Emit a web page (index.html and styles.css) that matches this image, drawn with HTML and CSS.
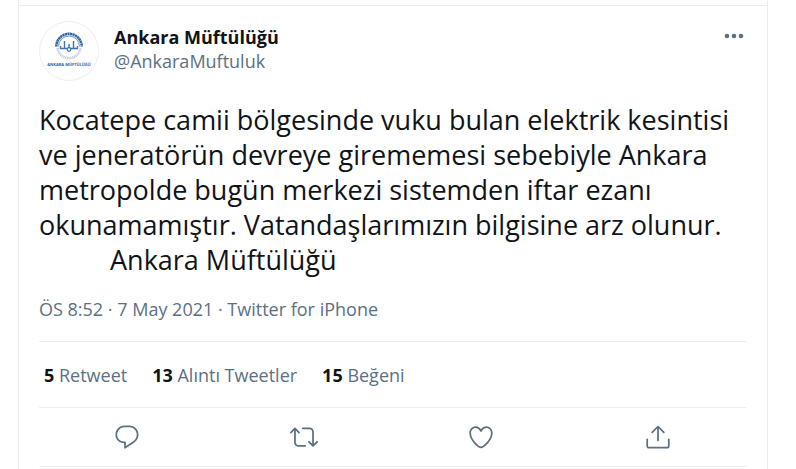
FILE: index.html
```html
<!DOCTYPE html>
<html lang="tr">
<head>
    <meta charset="utf-8">
    <meta name="viewport" content="width=device-width, initial-scale=1">
    <title>Ankara Müftülüğü</title>
    <link rel="stylesheet" href="styles.css">
</head>
<body>

<main class="column">
    <article class="tweet">

        <!-- author -->
        <header class="author">
            <svg class="avatar" viewBox="0 0 60 60" aria-hidden="true">
                <circle cx="30" cy="30" r="29.5" fill="#fefefe" stroke="#eceef0"/>
                <path d="M17.300 25.500a12.700 12.700 0 0 1 25.400 0" fill="none" stroke="#2f64a5" stroke-width="2.600" stroke-dasharray="2.200 .4"/>
                <path d="M19.500 25.500a10.500 10.500 0 0 1 21 0" fill="none" stroke="#6b94c6" stroke-width="1"/>
                <path d="M18.500 27a11.600 11.600 0 0 0 23 0" fill="none" stroke="#c3cedd" stroke-width="2.600" stroke-dasharray="1.200 .6"/>
                <path d="M25.500 20v7.500h-4v-2.500M34.500 20v7.500h4v-2.500M30 23v4M25.500 27.500h3M34.500 27.500h-3" fill="none" stroke="#3f74b4" stroke-width="1.400"/>
                <circle cx="30" cy="28.500" r="1.800" fill="none" stroke="#3f74b4" stroke-width="1.200"/>
                <text class="avatar-text" x="30" y="45" text-anchor="middle">ANKARA MÜFTÜLÜĞÜ</text>
            </svg>
            <div class="names">
                <a class="name" href="#">Ankara Müftülüğü</a>
                <a class="handle" href="#">@AnkaraMuftuluk</a>
            </div>
            <button class="more" type="button" aria-label="Daha fazla">
                <svg viewBox="0 0 24 24"><circle cx="5" cy="12" r="2.300"/><circle cx="12" cy="12" r="2.300"/><circle cx="19" cy="12" r="2.300"/></svg>
            </button>
        </header>

        <!-- text -->
        <div class="text">
            <p>Kocatepe camii bölgesinde vuku bulan elektrik kesintisi
            ve jeneratörün devreye girememesi sebebiyle Ankara
            metropolde bugün merkezi sistemden iftar ezanı
            okunamamıştır. Vatandaşlarımızın bilgisine arz olunur.</p>
            <p class="signature">Ankara Müftülüğü</p>
        </div>

        <div class="meta"><a href="#">ÖS 8:52 · 7 May 2021</a> · <a href="#">Twitter for iPhone</a></div>

        <!-- counts -->
        <div class="stats">
            <a href="#"><strong>5</strong> Retweet</a>
            <a href="#"><strong>13</strong> Alıntı Tweetler</a>
            <a href="#"><strong>15</strong> Beğeni</a>
        </div>

        <!-- actions -->
        <div class="actions">
            <button type="button" aria-label="Yanıtla">
                <svg viewBox="0 0 24 24"><path d="M14.046 2.242l-4.148-.01h-.002c-4.374 0-7.8 3.427-7.8 7.802 0 4.098 3.186 7.206 7.465 7.37v3.828c0 .108.044.286.12.403.142.225.384.347.632.347.138 0 .277-.038.402-.118.264-.168 6.473-4.14 8.088-5.506 1.902-1.61 3.04-3.97 3.043-6.312v-.017c-.006-4.367-3.43-7.787-7.8-7.788zm3.787 12.972c-1.134.96-4.862 3.405-6.772 4.643V16.67c0-.414-.335-.75-.75-.75h-.396c-3.66 0-6.318-2.476-6.318-5.886 0-3.534 2.768-6.302 6.3-6.302l4.147.01h.002c3.532 0 6.3 2.766 6.302 6.296-.003 1.91-.942 3.844-2.514 5.176z"/></svg>
            </button>
            <button type="button" aria-label="Retweetle">
                <svg viewBox="0 0 24 24"><path d="M23.77 15.67c-.292-.293-.767-.293-1.06 0l-2.22 2.22V7.65c0-2.068-1.683-3.75-3.75-3.75h-5.85c-.414 0-.75.336-.75.75s.336.75.75.75h5.85c1.24 0 2.25 1.01 2.25 2.25v10.24l-2.22-2.22c-.293-.293-.768-.293-1.06 0s-.294.768 0 1.06l3.5 3.5c.145.147.337.22.53.22s.383-.072.53-.22l3.5-3.5c.294-.292.294-.767 0-1.06zm-10.66 3.28H7.26c-1.24 0-2.25-1.01-2.25-2.25V6.46l2.22 2.22c.148.147.34.22.532.22s.384-.073.53-.22c.293-.293.293-.768 0-1.06l-3.5-3.5c-.293-.294-.768-.294-1.06 0l-3.5 3.5c-.294.292-.294.767 0 1.06s.767.293 1.06 0l2.22-2.22V16.7c0 2.068 1.683 3.75 3.75 3.75h5.85c.414 0 .75-.336.75-.75s-.337-.75-.75-.75z"/></svg>
            </button>
            <button type="button" aria-label="Beğen">
                <svg viewBox="0 0 24 24"><path d="M12 21.638h-.014C9.403 21.59 1.95 14.856 1.95 8.478c0-3.064 2.525-5.754 5.403-5.754 2.29 0 3.83 1.58 4.646 2.73.814-1.148 2.354-2.73 4.645-2.73 2.88 0 5.404 2.69 5.404 5.755 0 6.376-7.454 13.11-10.037 13.157H12zM7.354 4.225c-2.08 0-3.903 1.988-3.903 4.255 0 5.74 7.034 11.596 8.55 11.658 1.518-.062 8.55-5.917 8.55-11.658 0-2.267-1.823-4.255-3.903-4.255-2.528 0-3.94 2.936-3.952 2.965-.23.562-1.156.562-1.387 0-.014-.03-1.425-2.965-3.954-2.965z"/></svg>
            </button>
            <button type="button" aria-label="Paylaş">
                <svg viewBox="0 0 24 24"><path d="M17.53 7.47l-5-5c-.293-.293-.768-.293-1.06 0l-5 5c-.294.293-.294.768 0 1.06s.767.294 1.06 0l3.72-3.72V15c0 .414.336.75.75.75s.75-.336.75-.75V4.81l3.72 3.72c.146.147.338.22.53.22s.384-.072.53-.22c.293-.293.293-.767 0-1.06z"/><path d="M19.708 21.944H4.292C3.028 21.944 2 20.916 2 19.652V14c0-.414.336-.75.75-.75s.75.336.75.75v5.652c0 .437.355.792.792.792h15.416c.437 0 .792-.355.792-.792V14c0-.414.336-.75.75-.75s.75.336.75.75v5.652c0 1.264-1.028 2.292-2.292 2.292z"/></svg>
            </button>
        </div>

    </article>
</main>

</body>
</html>
```
FILE: styles.css
```css
* {
    box-sizing: border-box;
}

body {
    margin: 0;
    background: #fff;
    color: #0f1419;
    font-family: "Segoe UI", "Open Sans", "Noto Sans", sans-serif;
    font-size: 18px;
    line-height: 24px;
}

p {
    margin: 0;
}

a {
    color: inherit;
    text-decoration: none;
}

a:hover {
    text-decoration: underline;
}

button {
    display: flex;
    padding: 0;
    border: 0;
    background: none;
    cursor: pointer;
}

button svg {
    fill: #5b7083;
}

/* timeline column */
.column {
    min-height: 100vh;
    margin: 0 28px 0 18px;
    padding-top: 5px;
    border: solid #ebeef0;
    border-width: 0 1px;
}

.tweet {
    padding: 15px 21px 0 20px;
    border-top: 1px solid #ebeef0;
}

/* author */
.author {
    display: flex;
    gap: 15px;
}

.avatar {
    width: 60px;
    height: 60px;
}

.avatar-text {
    fill: #2f64a5;
    font-size: 4px;
    font-weight: 700;
}

.names {
    display: flex;
    flex: 1;
    flex-direction: column;
    align-items: flex-start;
    padding-top: 4px;
}

.name {
    font-weight: 700;
}

.handle,
.meta,
.stats {
    color: #5b7083;
}

.more {
    align-self: flex-start;
    padding-top: 3px;
}

.more svg {
    width: 24px;
    height: 24px;
}

/* text */
.text {
    padding-top: 21px;
    font-size: 27px;
    line-height: 35px;
}

.signature {
    padding-left: 71px;
}

.meta {
    padding: 20px 0;
}

/* counts */
.stats {
    display: flex;
    gap: 25px;
    padding: 21px 5px 20px;
    border: solid #ebeef0;
    border-width: 1px 0;
}

.stats strong {
    color: #0f1419;
}

/* actions */
.actions {
    display: flex;
    height: 59px;
    border-bottom: 1px solid #ebeef0;
}

.actions button {
    flex: 1;
    align-items: center;
    justify-content: center;
}

.actions svg {
    width: 28px;
    height: 28px;
}
```
